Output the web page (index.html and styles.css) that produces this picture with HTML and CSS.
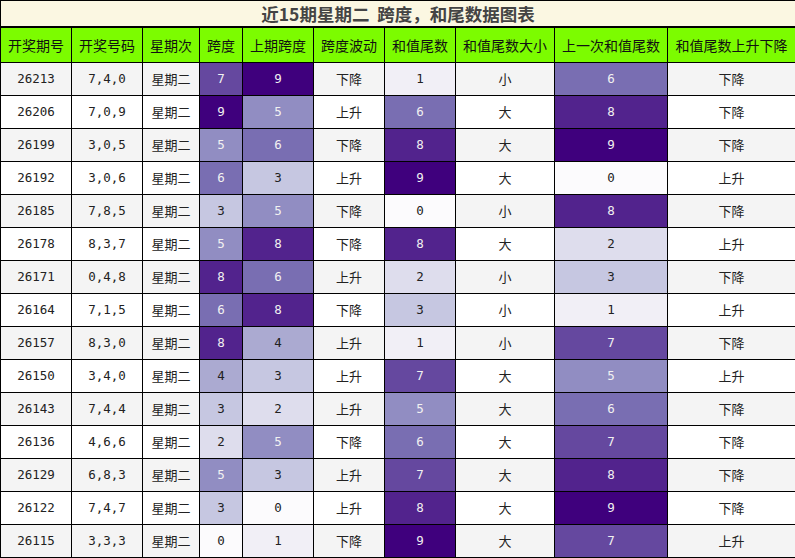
FILE: index.html
```html
<!DOCTYPE html>
<html lang="zh">
<head>
<meta charset="utf-8">
<link rel="stylesheet" href="styles.css">
</head>
<body>
<table class="chart">
<colgroup>
<col class="c1"><col class="c2"><col class="c3"><col class="c4"><col class="c5"><col class="c6"><col class="c7"><col class="c8"><col class="c9"><col class="c10">
</colgroup>
<thead>
<tr class="title-row"><th colspan="10" class="title">近15期星期二&nbsp; 跨度，和尾数据图表</th></tr>
<tr class="head-row">
<th>开奖期号</th><th>开奖号码</th><th>星期次</th><th>跨度</th><th>上期跨度</th><th>跨度波动</th><th>和值尾数</th><th>和值尾数大小</th><th>上一次和值尾数</th><th>和值尾数上升下降</th>
</tr>
</thead>
<tbody>
<tr><td class="num">26213</td><td class="num">7,4,0</td><td>星期二</td><td class="num p7">7</td><td class="num p9">9</td><td>下降</td><td class="num p1">1</td><td>小</td><td class="num p6">6</td><td>下降</td></tr>
<tr><td class="num">26206</td><td class="num">7,0,9</td><td>星期二</td><td class="num p9">9</td><td class="num p5">5</td><td>上升</td><td class="num p6">6</td><td>大</td><td class="num p8">8</td><td>下降</td></tr>
<tr><td class="num">26199</td><td class="num">3,0,5</td><td>星期二</td><td class="num p5">5</td><td class="num p6">6</td><td>下降</td><td class="num p8">8</td><td>大</td><td class="num p9">9</td><td>下降</td></tr>
<tr><td class="num">26192</td><td class="num">3,0,6</td><td>星期二</td><td class="num p6">6</td><td class="num p3">3</td><td>上升</td><td class="num p9">9</td><td>大</td><td class="num p0">0</td><td>上升</td></tr>
<tr><td class="num">26185</td><td class="num">7,8,5</td><td>星期二</td><td class="num p3">3</td><td class="num p5">5</td><td>下降</td><td class="num p0">0</td><td>小</td><td class="num p8">8</td><td>下降</td></tr>
<tr><td class="num">26178</td><td class="num">8,3,7</td><td>星期二</td><td class="num p5">5</td><td class="num p8">8</td><td>下降</td><td class="num p8">8</td><td>大</td><td class="num p2">2</td><td>上升</td></tr>
<tr><td class="num">26171</td><td class="num">0,4,8</td><td>星期二</td><td class="num p8">8</td><td class="num p6">6</td><td>上升</td><td class="num p2">2</td><td>小</td><td class="num p3">3</td><td>下降</td></tr>
<tr><td class="num">26164</td><td class="num">7,1,5</td><td>星期二</td><td class="num p6">6</td><td class="num p8">8</td><td>下降</td><td class="num p3">3</td><td>小</td><td class="num p1">1</td><td>上升</td></tr>
<tr><td class="num">26157</td><td class="num">8,3,0</td><td>星期二</td><td class="num p8">8</td><td class="num p4">4</td><td>上升</td><td class="num p1">1</td><td>小</td><td class="num p7">7</td><td>下降</td></tr>
<tr><td class="num">26150</td><td class="num">3,4,0</td><td>星期二</td><td class="num p4">4</td><td class="num p3">3</td><td>上升</td><td class="num p7">7</td><td>大</td><td class="num p5">5</td><td>上升</td></tr>
<tr><td class="num">26143</td><td class="num">7,4,4</td><td>星期二</td><td class="num p3">3</td><td class="num p2">2</td><td>上升</td><td class="num p5">5</td><td>大</td><td class="num p6">6</td><td>下降</td></tr>
<tr><td class="num">26136</td><td class="num">4,6,6</td><td>星期二</td><td class="num p2">2</td><td class="num p5">5</td><td>下降</td><td class="num p6">6</td><td>大</td><td class="num p7">7</td><td>下降</td></tr>
<tr><td class="num">26129</td><td class="num">6,8,3</td><td>星期二</td><td class="num p5">5</td><td class="num p3">3</td><td>上升</td><td class="num p7">7</td><td>大</td><td class="num p8">8</td><td>下降</td></tr>
<tr><td class="num">26122</td><td class="num">7,4,7</td><td>星期二</td><td class="num p3">3</td><td class="num p0">0</td><td>上升</td><td class="num p8">8</td><td>大</td><td class="num p9">9</td><td>下降</td></tr>
<tr><td class="num">26115</td><td class="num">3,3,3</td><td>星期二</td><td class="num p0">0</td><td class="num p1">1</td><td>下降</td><td class="num p9">9</td><td>大</td><td class="num p7">7</td><td>上升</td></tr>
</tbody>
</table>
</body>
</html>
```

FILE: styles.css
```css
html, body {
  margin: 0;
  padding: 0;
  background: #ffffff;
}

.chart {
  width: 795px;
  table-layout: fixed;
  border-collapse: collapse;
  font-family: "Noto Sans CJK SC", "Noto Sans", sans-serif;
  color: #222;
}

.c1 { width: 71px; }
.c2 { width: 71px; }
.c3 { width: 57px; }
.c4 { width: 43px; }
.c5 { width: 71px; }
.c6 { width: 71px; }
.c7 { width: 71px; }
.c8 { width: 99px; }
.c9 { width: 113px; }
.c10 { width: 128px; }

.chart th,
.chart td {
  border: 1px solid #000;
  padding: 0;
  text-align: center;
  vertical-align: middle;
  overflow: hidden;
  white-space: nowrap;
}

.title {
  height: 25px;
  background: #fbf7e2;
  color: #444;
  font-size: 17.5px;
  font-weight: bold;
  line-height: 25px;
  border-bottom: 2px solid #000 !important;
}

.head-row th {
  height: 34px;
  background: #7cfc00;
  color: #111;
  font-size: 14px;
  font-weight: normal;
  line-height: 34px;
}

.chart tbody td {
  height: 32px;
  font-size: 13px;
  line-height: 32px;
  background: #ffffff;
}

.chart tbody tr:nth-child(odd) td {
  background: #f4f4f4;
}

.chart tbody td.num {
  font-family: "DejaVu Sans Mono", "Liberation Mono", monospace;
  font-size: 12.5px;
}

.chart tbody tr td.p0 { background: #fcfbfd; color: #222; }
.chart tbody tr td.p1 { background: #f1eff6; color: #222; }
.chart tbody tr td.p2 { background: #dedded; color: #222; }
.chart tbody tr td.p3 { background: #c6c7e1; color: #222; }
.chart tbody tr td.p4 { background: #abaad1; color: #222; }
.chart tbody tr td.p5 { background: #918dc2; color: #f1f1f1; }
.chart tbody tr td.p6 { background: #796eb2; color: #f1f1f1; }
.chart tbody tr td.p7 { background: #65489f; color: #f1f1f1; }
.chart tbody tr td.p8 { background: #52238d; color: #f1f1f1; }
.chart tbody tr td.p9 { background: #3f007d; color: #f1f1f1; }
```
